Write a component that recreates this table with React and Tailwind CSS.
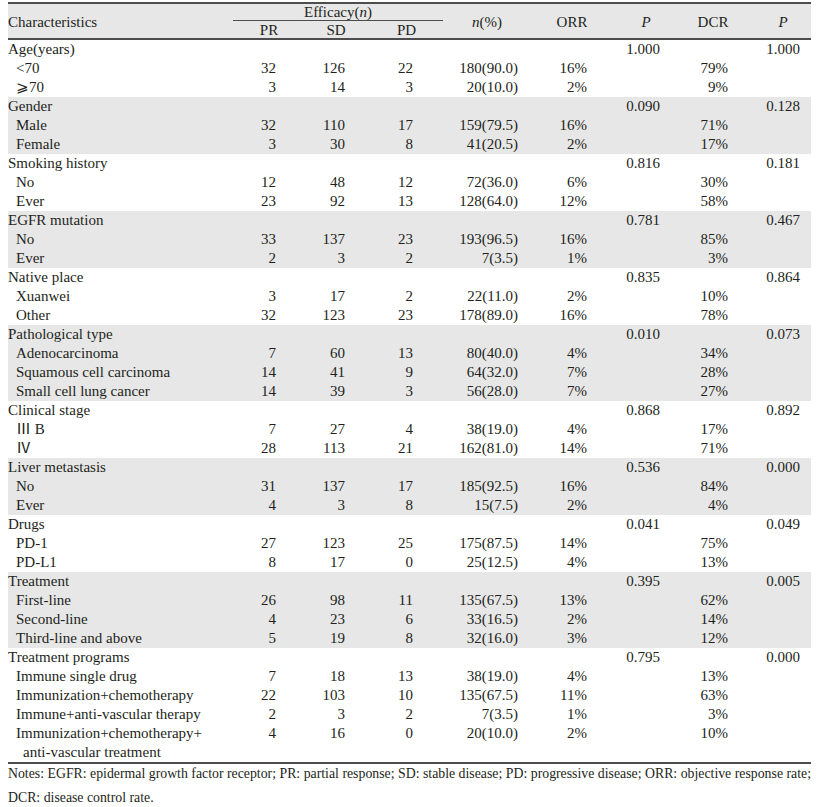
const GROUPS = [
  { title: 'Age(years)', p1: '1.000', p2: '1.000', rows: [
    ['<70', '32', '126', '22', '180(90.0)', '16%', '79%'],
    ['⩾70', '3', '14', '3', '20(10.0)', '2%', '9%'],
  ] },
  { title: 'Gender', p1: '0.090', p2: '0.128', rows: [
    ['Male', '32', '110', '17', '159(79.5)', '16%', '71%'],
    ['Female', '3', '30', '8', '41(20.5)', '2%', '17%'],
  ] },
  { title: 'Smoking history', p1: '0.816', p2: '0.181', rows: [
    ['No', '12', '48', '12', '72(36.0)', '6%', '30%'],
    ['Ever', '23', '92', '13', '128(64.0)', '12%', '58%'],
  ] },
  { title: 'EGFR mutation', p1: '0.781', p2: '0.467', rows: [
    ['No', '33', '137', '23', '193(96.5)', '16%', '85%'],
    ['Ever', '2', '3', '2', '7(3.5)', '1%', '3%'],
  ] },
  { title: 'Native place', p1: '0.835', p2: '0.864', rows: [
    ['Xuanwei', '3', '17', '2', '22(11.0)', '2%', '10%'],
    ['Other', '32', '123', '23', '178(89.0)', '16%', '78%'],
  ] },
  { title: 'Pathological type', p1: '0.010', p2: '0.073', rows: [
    ['Adenocarcinoma', '7', '60', '13', '80(40.0)', '4%', '34%'],
    ['Squamous cell carcinoma', '14', '41', '9', '64(32.0)', '7%', '28%'],
    ['Small cell lung cancer', '14', '39', '3', '56(28.0)', '7%', '27%'],
  ] },
  { title: 'Clinical stage', p1: '0.868', p2: '0.892', rows: [
    ['Ⅲ B', '7', '27', '4', '38(19.0)', '4%', '17%'],
    ['Ⅳ', '28', '113', '21', '162(81.0)', '14%', '71%'],
  ] },
  { title: 'Liver metastasis', p1: '0.536', p2: '0.000', rows: [
    ['No', '31', '137', '17', '185(92.5)', '16%', '84%'],
    ['Ever', '4', '3', '8', '15(7.5)', '2%', '4%'],
  ] },
  { title: 'Drugs', p1: '0.041', p2: '0.049', rows: [
    ['PD-1', '27', '123', '25', '175(87.5)', '14%', '75%'],
    ['PD-L1', '8', '17', '0', '25(12.5)', '4%', '13%'],
  ] },
  { title: 'Treatment', p1: '0.395', p2: '0.005', rows: [
    ['First-line', '26', '98', '11', '135(67.5)', '13%', '62%'],
    ['Second-line', '4', '23', '6', '33(16.5)', '2%', '14%'],
    ['Third-line and above', '5', '19', '8', '32(16.0)', '3%', '12%'],
  ] },
  { title: 'Treatment programs', p1: '0.795', p2: '0.000', rows: [
    ['Immune single drug', '7', '18', '13', '38(19.0)', '4%', '13%'],
    ['Immunization+chemotherapy', '22', '103', '10', '135(67.5)', '11%', '63%'],
    ['Immune+anti-vascular therapy', '2', '3', '2', '7(3.5)', '1%', '3%'],
    ['Immunization+chemotherapy+', '4', '16', '0', '20(10.0)', '2%', '10%', 'anti-vascular treatment'],
  ] },
];

const COLS = 'grid grid-cols-[228px_66px_68px_73px_88px_82px_66px_68px_64px]';

function Row({ r }) {
  const [label, pr, sd, pd, n, orr, dcr, extra] = r;
  return (
    <div className={COLS}>
      <div className="pl-2 h-[19px] leading-[19px] whitespace-nowrap">
        {label}
        {extra && <div className="pl-[7px] h-[19px] leading-[19px]">{extra}</div>}
      </div>
      <div className="text-right pr-[26px] leading-[19px]">{pr}</div>
      <div className="text-right pr-[25px] leading-[19px]">{sd}</div>
      <div className="text-right pr-[30px] leading-[19px]">{pd}</div>
      <div className="text-right pr-[13px] leading-[19px]">{n}</div>
      <div className="text-right pr-[26px] leading-[19px]">{orr}</div>
      <div className="leading-[19px]"></div>
      <div className="text-right pr-[19px] leading-[19px]">{dcr}</div>
      <div className="leading-[19px]"></div>
      {extra && <div className="col-span-9 h-[19px]"></div>}
    </div>
  );
}

export default function App() {
  return (
    <div className="w-[818px] h-[807px] bg-white pt-[2px] px-[8px] text-[15px] text-[#231f20]" style={{ fontFamily: '"Liberation Serif", "Noto Sans CJK SC", serif' }}>
      <div className="w-[803px]">
        {/* header */}
        <div className={`${COLS} bg-[#e7e7e7] border-t-2 border-b-2 border-[#4d4d4d] h-[38px]`}>
          <div className="flex items-center leading-none pt-[3px]">Characteristics</div>
          <div className="col-span-3 flex flex-col">
            <div className="h-[17px] leading-[17px] text-center border-b border-[#4d4d4d] -ml-[3px]">Efficacy(<i>n</i>)</div>
            <div className="grid grid-cols-[66px_68px_73px] h-[17px] leading-[18px]">
              <div className="text-center">PR</div>
              <div className="text-center">SD</div>
              <div className="text-center">PD</div>
            </div>
          </div>
          <div className="flex items-center justify-center pt-[3px]"><i>n</i>(%)</div>
          <div className="flex items-center justify-center pt-[3px]">ORR</div>
          <div className="flex items-center justify-center pt-[3px]"><i>P</i></div>
          <div className="flex items-center justify-center pt-[3px]">DCR</div>
          <div className="flex items-center justify-center pl-[8px] pt-[3px]"><i>P</i></div>
        </div>

        {/* body */}
        {GROUPS.map((g, i) => (
          <div key={g.title} className={i % 2 === 1 ? 'bg-[#e7e7e7]' : 'bg-white'}>
            <div className={COLS}>
              <div className="h-[19px] leading-[19px]">{g.title}</div>
              <div></div><div></div><div></div><div></div><div></div>
              <div className="text-right pr-[19px] leading-[19px]">{g.p1}</div>
              <div></div>
              <div className="text-right pr-[11px] leading-[19px]">{g.p2}</div>
            </div>
            {g.rows.map(r => <Row key={r[0]} r={r} />)}
          </div>
        ))}

        <div className="border-t-2 border-[#4d4d4d]"></div>
        <p className="text-[13.8px] leading-[24px] text-justify [text-align-last:left] -mt-[2px]">
          Notes: EGFR: epidermal growth factor receptor; PR: partial response; SD: stable disease; PD: progressive disease; ORR: objective response rate; DCR: disease control rate.
        </p>
      </div>
    </div>
  );
}
